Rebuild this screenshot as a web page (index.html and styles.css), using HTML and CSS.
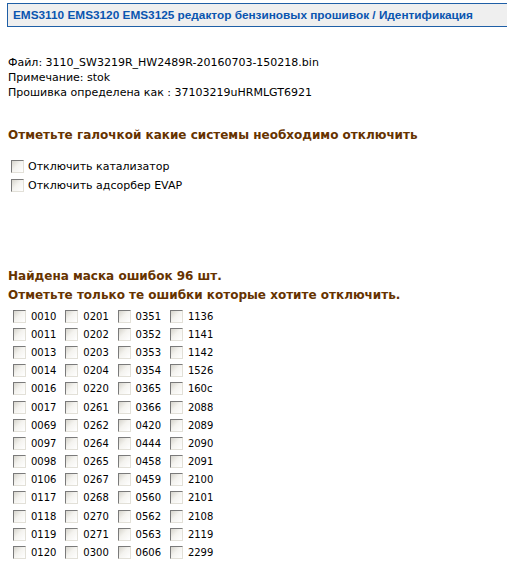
FILE: index.html
```html
<!DOCTYPE html>
<html lang="ru">
<head>
<meta charset="utf-8">
<link rel="stylesheet" href="styles.css">
</head>
<body>
<div class="title">EMS3110 EMS3120 EMS3125 редактор бензиновых прошивок / Идентификация</div>
<div class="info">
  <div>Файл: 3110_SW3219R_HW2489R-20160703-150218.bin</div>
  <div>Примечание: stok</div>
  <div>Прошивка определена как : 37103219uHRMLGT6921</div>
</div>
<h2 class="h-sys">Отметьте галочкой какие системы необходимо отключить</h2>
<div class="systems">
  <label class="opt"><span class="cb"></span>Отключить катализатор</label>
  <label class="opt"><span class="cb"></span>Отключить адсорбер EVAP</label>
</div>
<h2 class="h-err">Найдена маска ошибок 96 шт.<br>Отметьте только те ошибки которые хотите отключить.</h2>
<div class="grid">
  <label class="e"><span class="cb"></span>0010</label><label class="e"><span class="cb"></span>0201</label><label class="e"><span class="cb"></span>0351</label><label class="e"><span class="cb"></span>1136</label>
  <label class="e"><span class="cb"></span>0011</label><label class="e"><span class="cb"></span>0202</label><label class="e"><span class="cb"></span>0352</label><label class="e"><span class="cb"></span>1141</label>
  <label class="e"><span class="cb"></span>0013</label><label class="e"><span class="cb"></span>0203</label><label class="e"><span class="cb"></span>0353</label><label class="e"><span class="cb"></span>1142</label>
  <label class="e"><span class="cb"></span>0014</label><label class="e"><span class="cb"></span>0204</label><label class="e"><span class="cb"></span>0354</label><label class="e"><span class="cb"></span>1526</label>
  <label class="e"><span class="cb"></span>0016</label><label class="e"><span class="cb"></span>0220</label><label class="e"><span class="cb"></span>0365</label><label class="e"><span class="cb"></span>160c</label>
  <label class="e"><span class="cb"></span>0017</label><label class="e"><span class="cb"></span>0261</label><label class="e"><span class="cb"></span>0366</label><label class="e"><span class="cb"></span>2088</label>
  <label class="e"><span class="cb"></span>0069</label><label class="e"><span class="cb"></span>0262</label><label class="e"><span class="cb"></span>0420</label><label class="e"><span class="cb"></span>2089</label>
  <label class="e"><span class="cb"></span>0097</label><label class="e"><span class="cb"></span>0264</label><label class="e"><span class="cb"></span>0444</label><label class="e"><span class="cb"></span>2090</label>
  <label class="e"><span class="cb"></span>0098</label><label class="e"><span class="cb"></span>0265</label><label class="e"><span class="cb"></span>0458</label><label class="e"><span class="cb"></span>2091</label>
  <label class="e"><span class="cb"></span>0106</label><label class="e"><span class="cb"></span>0267</label><label class="e"><span class="cb"></span>0459</label><label class="e"><span class="cb"></span>2100</label>
  <label class="e"><span class="cb"></span>0117</label><label class="e"><span class="cb"></span>0268</label><label class="e"><span class="cb"></span>0560</label><label class="e"><span class="cb"></span>2101</label>
  <label class="e"><span class="cb"></span>0118</label><label class="e"><span class="cb"></span>0270</label><label class="e"><span class="cb"></span>0562</label><label class="e"><span class="cb"></span>2108</label>
  <label class="e"><span class="cb"></span>0119</label><label class="e"><span class="cb"></span>0271</label><label class="e"><span class="cb"></span>0563</label><label class="e"><span class="cb"></span>2119</label>
  <label class="e"><span class="cb"></span>0120</label><label class="e"><span class="cb"></span>0300</label><label class="e"><span class="cb"></span>0606</label><label class="e"><span class="cb"></span>2299</label>
</div>
</body>
</html>
```
FILE: styles.css
```css
html, body {
  margin: 0;
  padding: 0;
  background: #ffffff;
  overflow: hidden;
}
body {
  font-family: "DejaVu Sans", Verdana, sans-serif;
  font-size: 11px;
  color: #000000;
  width: 507px;
  height: 568px;
}
.title {
  margin: 3px 0 0 7px;
  width: 560px;
  height: 22px;
  border: 1px solid #1f5fa6;
  background: #efefef;
  color: #0a55b0;
  font-family: "Liberation Sans", Arial, sans-serif;
  font-weight: bold;
  font-size: 11.8px;
  line-height: 22px;
  padding-left: 5px;
  white-space: nowrap;
}
.info {
  margin: 28px 0 0 8px;
  line-height: 15px;
}
h2 {
  margin: 0;
  color: #663300;
  font-family: "DejaVu Sans", Verdana, sans-serif;
  font-weight: bold;
  font-size: 12px;
}
.h-sys {
  margin: 27px 0 0 8px;
  line-height: 16px;
}
.systems {
  display: flex;
  flex-direction: column;
  margin: 14px 0 0 11px;
}
.opt {
  display: flex;
  align-items: center;
  gap: 4px;
  height: 19px;
}
.cb {
  display: inline-block;
  box-sizing: border-box;
  width: 13px;
  height: 13px;
  border-top: 1px solid #7a7a7a;
  border-left: 1px solid #7a7a7a;
  border-right: 1px solid #e2e0d8;
  border-bottom: 1px solid #e2e0d8;
  background: linear-gradient(135deg, #d6d4cc 0%, #f4f3ef 45%, #ffffff 100%);
  flex: none;
}
.h-err {
  margin: 72px 0 0 8px;
  line-height: 19px;
}
.grid {
  display: grid;
  grid-template-columns: repeat(4, 52.3px);
  grid-auto-rows: 18.2px;
  margin: 2px 0 0 13px;
  font-size: 10px;
}
.e {
  display: flex;
  align-items: center;
  gap: 5px;
}
```
